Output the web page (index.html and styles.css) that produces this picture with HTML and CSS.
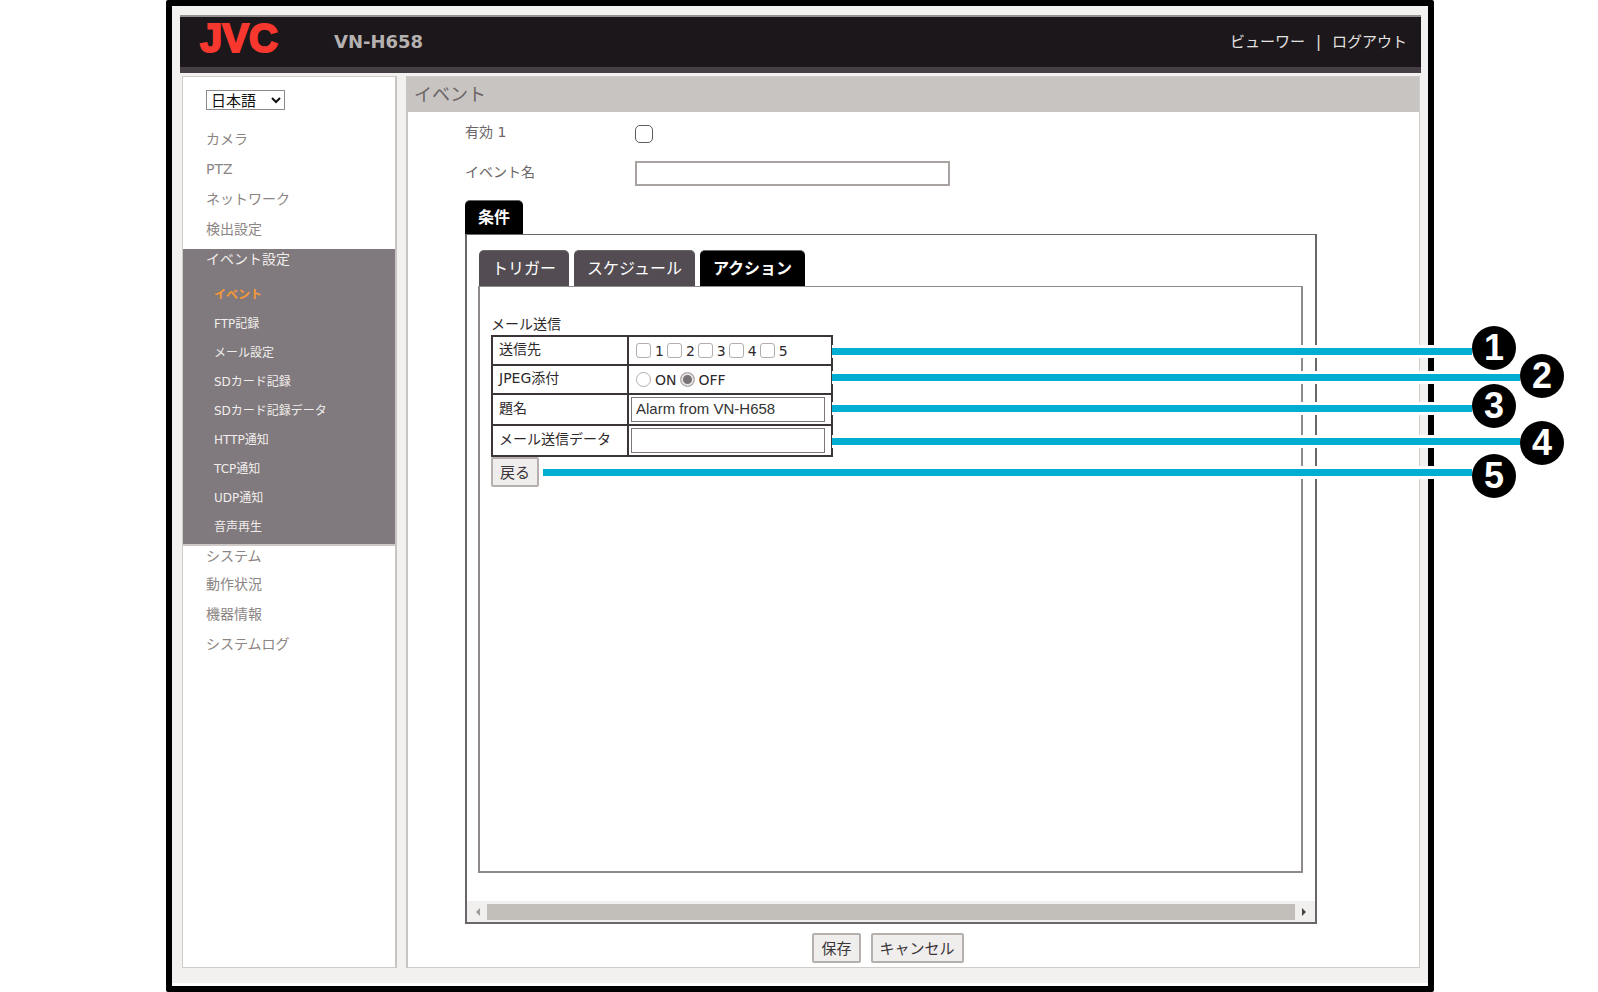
FILE: index.html
```html
<!DOCTYPE html>
<html lang="ja">
<head>
    <meta charset="UTF-8">
    <title>VN-H658</title>
    <link rel="stylesheet" href="styles.css">
</head>
<body>
    <div class="frame">
        <header class="topbar">
            <span class="logo">JVC</span>
            <span class="model">VN-H658</span>
            <nav class="links">
                <a href="#">ビューワー</a>
                <span>|</span>
                <a href="#">ログアウト</a>
            </nav>
        </header>

        <div class="columns">
            <aside class="sidebar">
                <select class="language" aria-label="言語">
                    <option>日本語</option>
                </select>
                <ul class="menu">
                    <li><a href="#">カメラ</a></li>
                    <li><a href="#">PTZ</a></li>
                    <li><a href="#">ネットワーク</a></li>
                    <li><a href="#">検出設定</a></li>
                    <li class="open">
                        <a href="#">イベント設定</a>
                        <ul class="submenu">
                            <li><a class="current" href="#">イベント</a></li>
                            <li><a href="#">FTP記録</a></li>
                            <li><a href="#">メール設定</a></li>
                            <li><a href="#">SDカード記録</a></li>
                            <li><a href="#">SDカード記録データ</a></li>
                            <li><a href="#">HTTP通知</a></li>
                            <li><a href="#">TCP通知</a></li>
                            <li><a href="#">UDP通知</a></li>
                            <li><a href="#">音声再生</a></li>
                        </ul>
                    </li>
                    <li><a href="#">システム</a></li>
                    <li><a href="#">動作状況</a></li>
                    <li><a href="#">機器情報</a></li>
                    <li><a href="#">システムログ</a></li>
                </ul>
            </aside>

            <main class="content">
                <h1>イベント</h1>
                <form class="event">
                    <div class="fields">
                        <label for="enabled">有効 1</label>
                        <input type="checkbox" id="enabled">
                        <label for="eventName">イベント名</label>
                        <input type="text" id="eventName">
                    </div>

                    <div class="tabs">
                        <button type="button" class="tab active">条件</button>
                    </div>
                    <div class="outer-panel">
                        <div class="tabs inner-tabs">
                            <button type="button" class="tab">トリガー</button>
                            <button type="button" class="tab">スケジュール</button>
                            <button type="button" class="tab active">アクション</button>
                        </div>
                        <div class="inner-panel">
                            <table class="mail">
                                <caption>メール送信</caption>
                                <tr>
                                    <th>送信先</th>
                                    <td>
                                        <div class="choices">
                                            <label><input type="checkbox">1</label>
                                            <label><input type="checkbox">2</label>
                                            <label><input type="checkbox">3</label>
                                            <label><input type="checkbox">4</label>
                                            <label><input type="checkbox">5</label>
                                        </div>
                                    </td>
                                </tr>
                                <tr>
                                    <th>JPEG添付</th>
                                    <td>
                                        <div class="choices">
                                            <label><input type="radio" name="jpeg">ON</label>
                                            <label><input type="radio" name="jpeg" checked>OFF</label>
                                        </div>
                                    </td>
                                </tr>
                                <tr class="text-row">
                                    <th><label for="subject">題名</label></th>
                                    <td><input type="text" id="subject" value="Alarm from VN-H658"></td>
                                </tr>
                                <tr class="text-row">
                                    <th><label for="mailData">メール送信データ</label></th>
                                    <td><input type="text" id="mailData"></td>
                                </tr>
                            </table>
                            <button type="button" class="button">戻る</button>
                        </div>
                        <div class="scrollbar">
                            <svg class="dim" width="6" height="8" viewBox="0 0 6 8"><path d="M5 0v8L1 4z"/></svg>
                            <div class="thumb"></div>
                            <svg width="6" height="8" viewBox="0 0 6 8"><path d="M1 0v8l4-4z"/></svg>
                        </div>
                    </div>

                    <div class="actions">
                        <button type="submit" class="button">保存</button>
                        <button type="button" class="button">キャンセル</button>
                    </div>
                </form>
            </main>
        </div>

        <!-- numbered callouts over the screen -->
        <div class="callout c1"><span>1</span></div>
        <div class="callout far c2"><span>2</span></div>
        <div class="callout c3"><span>3</span></div>
        <div class="callout far c4"><span>4</span></div>
        <div class="callout c5"><span>5</span></div>
    </div>
</body>
</html>
```

FILE: styles.css
```css
* {
    box-sizing: border-box;
}
body {
    margin: 0;
    background-color: #fff;
    color: #4a4548;
    font-family: "DejaVu Sans", "Noto Sans CJK JP", sans-serif;
    font-size: 14px;
    line-height: 20px;
}
a {
    color: inherit;
    text-decoration: none;
}
ul {
    list-style: none;
    margin: 0;
    padding: 0;
}
button, select, input {
    font-family: inherit;
}
.frame {
    position: relative;
    display: flex;
    flex-direction: column;
    min-height: 100vh;
    margin: 0 164px 0 166px;
    padding: 9px 7px 18px 8px;
    border: 6px solid #000;
    border-radius: 2px;
    background-color: #f2f1ef;
    box-shadow: inset 0 -3px #fff;
}

/* top bar */
.topbar {
    display: flex;
    align-items: center;
    height: 58px;
    padding: 0 14px 0 20px;
    border-top: 2px solid #959193;
    border-bottom: 6px solid #453f45;
    background-color: #1b171a;
}
.logo {
    width: 134px;
    padding-bottom: 8px;
    color: #f8382f;
    font-family: "Liberation Sans", sans-serif;
    font-size: 40px;
    font-weight: bold;
    line-height: 40px;
    -webkit-text-stroke: 2px #f8382f;
}
.model {
    color: #b5b1b0;
    font-size: 18px;
    font-weight: bold;
}
.links {
    display: flex;
    gap: 11px;
    margin-left: auto;
    color: #e4e2e0;
    font-size: 15px;
}

/* columns */
.columns {
    display: flex;
    flex: 1;
    gap: 9px;
    margin: 3px 1px 0 2px;
}
.sidebar {
    flex: 0 0 215px;
    border: 1px solid #d0ccc9;
    border-right: 2px solid #c8c4c1;
    background-color: #fff;
}
.language {
    display: block;
    width: 79px;
    height: 20px;
    margin: 13px 0 14px 23px;
    padding: 0;
    border: 1px solid #8d898a;
    border-radius: 0;
    background-color: #fff;
    color: #111;
    font-size: 15px;
}
.menu a {
    display: block;
    padding-left: 23px;
    color: #8b8583;
    line-height: 30px;
}
.menu .open {
    margin: 5px 0 0;
    padding-bottom: 2px;
    border-bottom: 2px solid #cdc8c5;
    background-color: #80797d;
}
.menu .open > a {
    padding-bottom: 12px;
    color: #f0eeec;
    line-height: 20px;
}
.menu .submenu a {
    padding-left: 31px;
    color: #f0eeec;
    font-size: 12px;
    line-height: 29px;
}
.menu .submenu .current {
    color: #f79a36;
    font-weight: bold;
}
.menu .open + li a {
    line-height: 20px;
    padding-bottom: 3px;
}
.content {
    display: flex;
    flex: 1;
    flex-direction: column;
    min-width: 0;
    border: 1px solid #d0ccc9;
    border-left: 2px solid #c8c4c1;
    background-color: #fff;
}
h1 {
    margin: 0;
    padding: 0 6px;
    background-color: #c8c4c1;
    color: #6b6567;
    font-size: 18px;
    font-weight: normal;
    line-height: 35px;
}
.event {
    display: flex;
    flex: 1;
    flex-direction: column;
    padding: 8px 102px 4px 57px;
}
.fields {
    display: grid;
    grid-template-columns: 170px 1fr;
    grid-template-rows: 28px 25px;
    gap: 13px 0;
    align-items: center;
    margin-bottom: 14px;
    color: #6b6567;
}
.fields label {
    padding-bottom: 4px;
}
input[type="checkbox"], input[type="radio"] {
    appearance: none;
    width: 15px;
    height: 15px;
    margin: 0;
    border: 1px solid #b3aeac;
    border-radius: 3px;
    background-color: #fff;
}
input[type="checkbox"]:checked {
    background-color: #8a8587;
}
input[type="radio"] {
    border-radius: 50%;
}
input[type="radio"]:checked {
    border: 1px solid #b3aeac;
    background-color: #777275;
    box-shadow: inset 0 0 0 2px #e6e3e1;
}
.fields input[type="checkbox"] {
    width: 18px;
    height: 18px;
    border-color: #5f5a5c;
    border-radius: 5px;
}
input[type="text"] {
    height: 25px;
    padding: 0 4px 2px;
    border: 1px solid #7c7779;
    border-radius: 0;
    background-color: #fff;
    color: #333;
    font-family: "Liberation Sans", "Noto Sans CJK JP", sans-serif;
    font-size: 15px;
}
.fields input[type="text"] {
    width: 315px;
    border: 2px solid #a8a3a1;
}

/* tabs */
.tabs {
    display: flex;
    gap: 5px;
}
.tab {
    height: 34px;
    padding: 0 13px 4px;
    border: 0;
    border-top: 1px solid #6b6567;
    border-radius: 5px 5px 0 0;
    background-color: #534d53;
    color: #fff;
    font-size: 16px;
}
.tab.active {
    background-color: #000;
    font-weight: bold;
}
.inner-tabs .tab {
    height: 36px;
}
.outer-panel {
    display: flex;
    flex: 1;
    flex-direction: column;
    border: 2px solid #6b666a;
    border-top-width: 1px;
}
.inner-tabs {
    padding: 15px 12px 0;
}
.inner-panel {
    flex: 1;
    margin: 0 12px 28px 11px;
    padding: 26px 11px;
    border: 2px solid #8f8a8b;
    border-top-width: 1px;
}
.mail {
    width: 342px;
    border-collapse: collapse;
    color: #2e292c;
}
.mail caption {
    line-height: 22px;
    text-align: left;
}
.mail th, .mail td {
    height: 29px;
    padding: 0 2px;
    border: 2px solid #3b3539;
}
.mail th {
    width: 136px;
    padding: 0 6px 4px;
    font-weight: normal;
    text-align: left;
}
.mail .text-row th, .mail .text-row td {
    height: 31px;
}
.mail input[type="text"] {
    display: block;
    width: 194px;
}
.choices {
    display: flex;
    gap: 3px;
    padding-left: 5px;
}
.choices label {
    display: flex;
    align-items: center;
    gap: 4px;
}
.button {
    height: 30px;
    padding: 0 7px 2px;
    border: 2px solid #b5b0ad;
    border-radius: 2px;
    background-color: #efeeec;
    color: #3b3539;
    font-size: 15px;
}
.scrollbar {
    display: flex;
    align-items: center;
    gap: 6px;
    height: 21px;
    padding: 0 8px;
    background-color: #f1f0ee;
}
.scrollbar svg {
    fill: #4a4548;
}
.scrollbar .dim {
    fill: #a09b99;
}
.thumb {
    flex: 1;
    height: 16px;
    background-color: #c2beba;
}
.actions {
    display: flex;
    justify-content: center;
    gap: 10px;
    padding: 9px 6px 0 0;
}

/* callouts */
.callout {
    position: absolute;
    left: 660px;
    right: -44px;
    height: 13px;
    border: solid #fff;
    border-width: 3px 0;
    background-color: #00aed1;
}
.callout.far {
    right: -92px;
}
.callout span {
    position: absolute;
    right: -44px;
    width: 44px;
    height: 44px;
    border-radius: 50%;
    background-color: #000;
    color: #fff;
    font-family: "Liberation Sans", sans-serif;
    font-size: 36px;
    font-weight: bold;
    line-height: 44px;
    text-align: center;
}
.c1 {
    top: 339px;
}
.c2 {
    top: 365px;
}
.c3 {
    top: 396px;
}
.c4 {
    top: 429px;
}
.c5 {
    top: 460px;
    left: 371px;
}
.c1 span {
    top: -22px;
}
.c2 span {
    top: -20px;
}
.c3 span {
    top: -21px;
}
.c4 span {
    top: -17px;
}
.c5 span {
    top: -15px;
}
```
